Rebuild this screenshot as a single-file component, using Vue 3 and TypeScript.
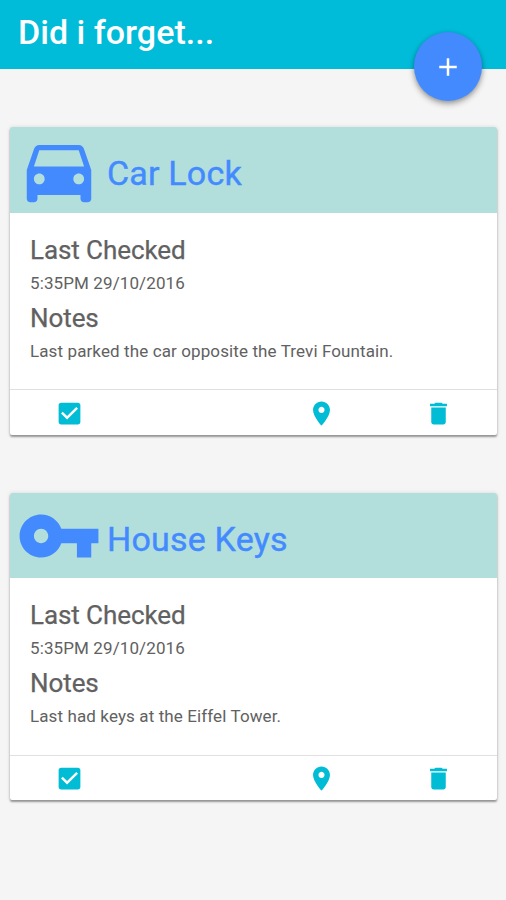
<script setup lang="ts">
interface Reminder {
  id: string
  title: string
  icon: string
  checked: string
  notes: string
}

const icons = {
  car: 'M18.92 6.01C18.72 5.42 18.16 5 17.5 5h-11c-.66 0-1.21.42-1.42 1.01L3 12v8c0 .55.45 1 1 1h1c.55 0 1-.45 1-1v-1h12v1c0 .55.45 1 1 1h1c.55 0 1-.45 1-1v-8l-2.08-5.99zM6.5 16c-.83 0-1.5-.67-1.5-1.5S5.67 13 6.5 13s1.5.67 1.5 1.5S7.33 16 6.5 16zm11 0c-.83 0-1.5-.67-1.5-1.5s.67-1.5 1.5-1.5 1.5.67 1.5 1.5-.67 1.5-1.5 1.5zM5 11l1.5-4.5h11L19 11H5z',
  key: 'M12.65 10C11.83 7.67 9.61 6 7 6c-3.31 0-6 2.69-6 6s2.69 6 6 6c2.61 0 4.83-1.67 5.65-4H17v4h4v-4h2v-4H12.65zM7 14c-1.1 0-2-.9-2-2s.9-2 2-2 2 .9 2 2-.9 2-2 2z',
  check: 'M19 3H5c-1.11 0-2 .9-2 2v14c0 1.1.89 2 2 2h14c1.11 0 2-.9 2-2V5c0-1.1-.89-2-2-2zm-9 14l-5-5 1.41-1.41L10 14.17l7.59-7.59L19 8l-9 9z',
  place: 'M12 2C8.13 2 5 5.13 5 9c0 5.25 7 13 7 13s7-7.75 7-13c0-3.87-3.13-7-7-7zm0 9.5c-1.38 0-2.5-1.12-2.5-2.5s1.12-2.5 2.5-2.5 2.5 1.12 2.5 2.5-1.12 2.5-2.5 2.5z',
  trash: 'M6 19c0 1.1.9 2 2 2h8c1.1 0 2-.9 2-2V7H6v12zM19 4h-3.5l-1-1h-5l-1 1H5v2h14V4z',
  add: 'M19 13h-6v6h-2v-6H5v-2h6V5h2v6h6v2z',
}

const reminders: Reminder[] = [
  {
    id: 'car',
    title: 'Car Lock',
    icon: icons.car,
    checked: '5:35PM 29/10/2016',
    notes: 'Last parked the car opposite the Trevi Fountain.',
  },
  {
    id: 'keys',
    title: 'House Keys',
    icon: icons.key,
    checked: '5:35PM 29/10/2016',
    notes: 'Last had keys at the Eiffel Tower.',
  },
]
</script>

<template>
  <div class="screen">
    <header class="bar">
      <h1 class="bar-title">Did i forget...</h1>
      <button class="fab" type="button">
        <svg viewBox="0 0 24 24"><path :d="icons.add" /></svg>
      </button>
    </header>
    <main class="list">
      <article v-for="item in reminders" :key="item.id" class="card">
        <div class="card-head">
          <svg class="card-icon" viewBox="0 0 24 24"><path :d="item.icon" /></svg>
          <h2 class="card-title">{{ item.title }}</h2>
        </div>
        <div class="card-body">
          <h3 class="label">Last Checked</h3>
          <p class="value">{{ item.checked }}</p>
          <h3 class="label">Notes</h3>
          <p class="value">{{ item.notes }}</p>
        </div>
        <div class="actions">
          <button class="action" type="button">
            <svg viewBox="0 0 24 24"><path :d="icons.check" /></svg>
          </button>
          <button class="action place" type="button">
            <svg viewBox="0 0 24 24"><path :d="icons.place" /></svg>
          </button>
          <button class="action" type="button">
            <svg viewBox="0 0 24 24"><path :d="icons.trash" /></svg>
          </button>
        </div>
      </article>
    </main>
  </div>
</template>

<style>
body {
  margin: 0;
  background: #f5f5f5;
}
</style>

<style scoped>
.screen {
  min-height: 900px;
  background: #f5f5f5;
  font-family: Roboto, "Liberation Sans", sans-serif;
}
h1, h2, h3, p {
  margin: 0;
}
button {
  padding: 0;
  border: 0;
  background: none;
}
svg {
  display: block;
  fill: currentColor;
}
.bar {
  position: relative;
  box-sizing: border-box;
  height: 69px;
  padding: 12px 18px 0;
  background: #00bcd9;
}
.bar-title {
  color: #fff;
  font-size: 34px;
  font-weight: 500;
  line-height: 40px;
  letter-spacing: 0.03px;
}
.fab {
  position: absolute;
  top: 32px;
  right: 24px;
  display: flex;
  align-items: center;
  justify-content: center;
  width: 68px;
  height: 69px;
  border-radius: 50%;
  background: #448aff;
  color: #fff;
  box-shadow: 0 3px 6px rgba(0, 0, 0, 0.32), 0 1px 4px rgba(0, 0, 0, 0.14);
}
.fab svg {
  width: 30px;
  height: 30px;
}
.list {
  display: flex;
  flex-direction: column;
  gap: 58px;
  padding: 58.4px 9px 0 10.3px;
}
.card {
  display: flex;
  flex-direction: column;
  height: 307.4px;
  border-radius: 2px;
  overflow: hidden;
  background: #fff;
  box-shadow: 0 2px 2px rgba(0, 0, 0, 0.36), 0 0 4px rgba(0, 0, 0, 0.12);
}
.card-head {
  display: flex;
  align-items: center;
  height: 85.6px;
  padding-left: 6px;
  background: #b2dfdb;
  color: #448aff;
}
.card-icon {
  width: 86px;
  height: 86px;
}
.card-title {
  margin: 6px 0 0 4.7px;
  font-size: 34px;
  font-weight: 400;
  line-height: 40px;
  letter-spacing: 0.2px;
  -webkit-text-stroke: 0.4px currentColor;
}
.card-body {
  flex: 1;
  padding: 20px 19.7px 0;
  color: #616161;
}
.label {
  font-size: 26px;
  font-weight: 400;
  line-height: 36px;
  letter-spacing: -0.08px;
  -webkit-text-stroke: 0.25px currentColor;
}
.label:first-child {
  margin-top: -1px;
}
.value {
  margin-bottom: 2px;
  font-size: 17px;
  line-height: 30px;
  letter-spacing: 0.11px;
}
.actions {
  display: flex;
  align-items: center;
  justify-content: space-between;
  box-sizing: border-box;
  height: 45.5px;
  padding: 2px 43.5px 0 44.5px;
  border-top: 1px solid #e0e0e0;
}
.action {
  color: #00bcd4;
}
.action.place {
  margin-left: 134px;
}
.action svg {
  width: 29px;
  height: 29px;
}
</style>
